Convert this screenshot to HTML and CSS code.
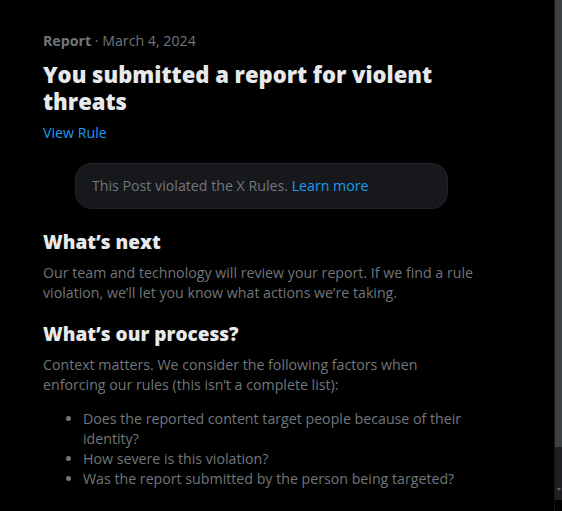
FILE: index.html
```html
<!DOCTYPE html>
<html lang="en">
<head>
<meta charset="utf-8">
<title>Report</title>
<link rel="stylesheet" href="styles.css">
</head>
<body>
<div class="page">
  <main class="content">
    <div class="meta"><span class="meta-strong">Report</span> · March 4, 2024</div>
    <h1 class="title">You submitted a report for violent threats</h1>
    <a class="link view-rule" href="#">View Rule</a>
    <div class="notice">This Post violated the X Rules. <a class="link" href="#">Learn more</a></div>
    <section class="section">
      <h2 class="section-title">What’s next</h2>
      <p class="text">Our team and technology will review your report. If we find a rule violation, we’ll let you know what actions we’re taking.</p>
    </section>
    <section class="section">
      <h2 class="section-title">What’s our process?</h2>
      <p class="text">Context matters. We consider the following factors when enforcing our rules (this isn’t a complete list):</p>
      <ul class="factors">
        <li>Does the reported content target people because of their identity?</li>
        <li>How severe is this violation?</li>
        <li>Was the report submitted by the person being targeted?</li>
      </ul>
    </section>
  </main>
  <div class="scrollbar">
    <div class="scroll-thumb"></div>
    <div class="scroll-track"><span class="scroll-arrow"></span></div>
  </div>
</div>
</body>
</html>
```
FILE: styles.css
```css
* { box-sizing: border-box; }
html, body { margin: 0; padding: 0; background: #000; }
body {
  font-family: "Open Sans", "Noto Sans", "Liberation Sans", sans-serif;
  color: #71767b;
  font-size: 14.2px;
  line-height: 20px;
}
.page {
  display: flex;
  width: 562px;
  height: 511px;
  overflow: hidden;
}
.content {
  width: 554px;
  padding: 31px 74px 0 43px;
}
.meta-strong { font-weight: 700; }
.title {
  margin: 10px 0 8px;
  font-size: 22px;
  line-height: 27px;
  font-weight: 800;
  color: #e7e9ea;
}
.link {
  color: #1d9bf0;
  text-decoration: none;
}
.view-rule {
  display: block;
}
.notice {
  margin: 20px 32px 21px;
  padding: 12px 16px;
  background: #16181c;
  border: 1px solid #202327;
  border-radius: 16px;
}
.section {
  margin-bottom: 19px;
}
.section-title {
  margin: 0 0 9px;
  font-size: 19px;
  line-height: 24px;
  font-weight: 800;
  color: #e7e9ea;
}
.text {
  margin: 0;
}
.factors {
  margin: 14px 0 0;
  padding-left: 40px;
}
.scrollbar {
  width: 8px;
  display: flex;
  flex-direction: column;
  border-left: 1px solid #17181a;
}
.scroll-thumb {
  height: 447px;
  background: #3c4043;
}
.scroll-track {
  height: 53px;
  background: #1e1f22;
  position: relative;
}
.scroll-arrow {
  position: absolute;
  left: 2px;
  top: 41px;
  border-left: 2px solid transparent;
  border-right: 2px solid transparent;
  border-top: 3px solid #5f6368;
}
```
